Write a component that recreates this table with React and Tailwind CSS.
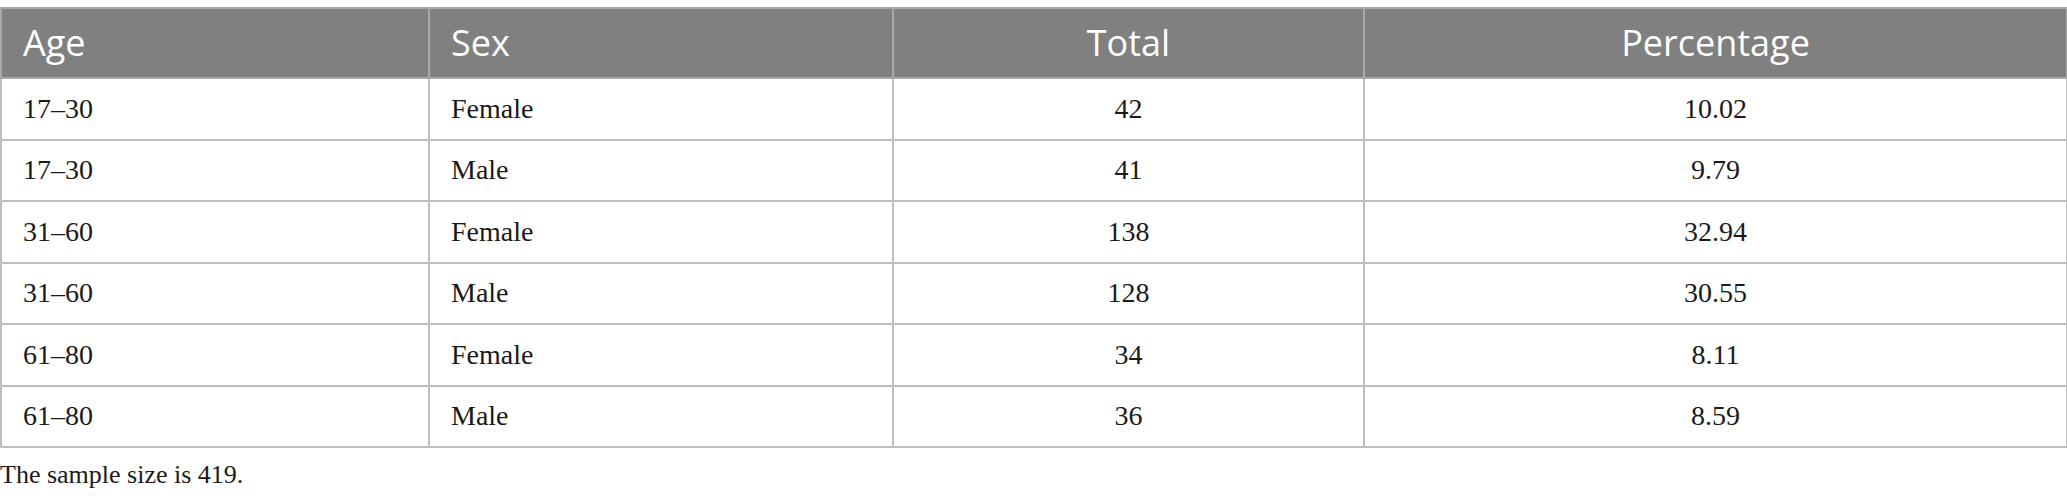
import React from 'react';

const rows = [
  ['17–30', 'Female', '42', '10.02'],
  ['17–30', 'Male', '41', '9.79'],
  ['31–60', 'Female', '138', '32.94'],
  ['31–60', 'Male', '128', '30.55'],
  ['61–80', 'Female', '34', '8.11'],
  ['61–80', 'Male', '36', '8.59'],
];

export default function App() {
  return (
    <div className="w-[2067px] bg-white pt-[7px]">
      <table className="w-[2066px] table-fixed border-collapse border-2 border-[#bdbdbd]">
        <colgroup>
          <col className="w-[428px]" />
          <col className="w-[464px]" />
          <col className="w-[471px]" />
          <col className="w-[703px]" />
        </colgroup>
        <thead>
          <tr className="h-[70px] bg-[#7f807f] text-white font-['Open_Sans',sans-serif] text-[36px]">
            <th className="border-2 border-[#a9a9a9] px-[21px] text-left font-normal">Age</th>
            <th className="border-2 border-[#a9a9a9] px-[21px] text-left font-normal">Sex</th>
            <th className="border-2 border-[#a9a9a9] px-[21px] text-center font-normal">Total</th>
            <th className="border-2 border-[#a9a9a9] px-[21px] text-center font-normal">Percentage</th>
          </tr>
        </thead>
        <tbody className="font-['Liberation_Serif',serif] text-[28px] text-[#1a1a1a]">
          {rows.map((r, i) => (
            <tr key={i} className="h-[61.5px]">
              <td className="border-2 border-[#bdbdbd] px-[21px] text-left">{r[0]}</td>
              <td className="border-2 border-[#bdbdbd] px-[21px] text-left">{r[1]}</td>
              <td className="border-2 border-[#bdbdbd] px-[21px] text-center">{r[2]}</td>
              <td className="border-2 border-[#bdbdbd] px-[21px] text-center">{r[3]}</td>
            </tr>
          ))}
        </tbody>
      </table>
      <p className="mt-[12px] font-['Liberation_Serif',serif] text-[26px] leading-[30px] text-[#1a1a1a]">
        The sample size is 419.
      </p>
    </div>
  );
}
